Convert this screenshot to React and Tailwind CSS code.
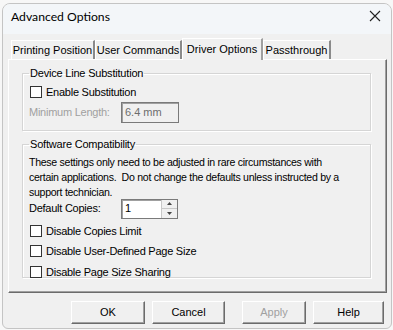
import React from "react";

const sans = { fontFamily: '"Liberation Sans", Arial, sans-serif' };

function Check({ label }) {
  return (
    <div className="flex items-center h-[20.5px]">
      <span className="ml-[1px] w-[12px] h-[12px] border border-[#333333] bg-white shrink-0" />
      <span className="ml-[4px] text-[11px] tracking-[-0.25px] text-black">{label}</span>
    </div>
  );
}

function Group({ title, className, children }) {
  return (
    <fieldset className={"border border-[#d5d5d5] shadow-[inset_1px_1px_0_#ffffff,1px_1px_0_#ffffff] px-[6px] " + className}>
      <legend className="px-[1px] text-[11px] leading-[13px] tracking-[-0.2px] text-black">{title}</legend>
      {children}
    </fieldset>
  );
}

function Tab({ label, active, w }) {
  if (active)
    return (
      <div className={"h-[22px] -mb-[1px] z-10 relative bg-[#f0f0f0] border-t border-l border-[#ffffff] border-r-2 border-r-[#a0a0a0] flex items-center justify-center text-[11px] " + w}>
        {label}
      </div>
    );
  return (
    <div className={"h-[19px] mt-[3px] border-t border-l border-[#ffffff] border-r-2 border-r-[#8a8a8a] flex items-center justify-center text-[11px] overflow-hidden whitespace-nowrap " + w}>
      {label}
    </div>
  );
}

function Btn({ label, disabled, w }) {
  return (
    <div
      className={
        "h-[23px] flex items-center justify-center text-[11px] border border-t-white border-l-white border-r-[#6b6b6b] border-b-[#6b6b6b] shadow-[inset_-1px_-1px_0_#a0a0a0] bg-[#f0f0f0] " +
        w +
        (disabled ? " text-[#a0a0a0]" : " text-black")
      }
    >
      {label}
    </div>
  );
}

export default function App() {
  return (
    <div className="w-[393px] h-[330px] bg-[#f7f7f7] pt-[3px] pl-[2px] overflow-hidden" style={sans}>
      <div className="w-[390px] h-[326px] rounded-t-[8px] rounded-b-[6px] border border-[#c4c4c4] bg-[#f0f0f0] overflow-hidden flex flex-col">
        <div className="h-[30px] bg-[#f3f6f9] flex items-start justify-between pt-[4px] pl-[8px] pr-[10px] shrink-0">
          <span className="text-[12.2px] leading-[17px] text-black" style={{ fontFamily: 'Lato, "Noto Sans", sans-serif' }}>
            Advanced Options
          </span>
          <svg width="12" height="12" viewBox="0 0 12 12" className="mt-[2px]">
            <path d="M1 1L11 11M11 1L1 11" stroke="#222" strokeWidth="1.1" />
          </svg>
        </div>
        <div className="pt-[3px] pl-[5px] pr-[4px]">
          <div className="flex h-[22px] items-end pl-[3px]">
            <Tab label="Printing Position" w="w-[84px]" />
            <Tab label="User Commands" w="w-[87px]" />
            <Tab label="Driver Options" w="w-[81px]" active />
            <Tab label="Passthrough" w="w-[68px]" />
          </div>
          <div className="h-[234px] border border-t-white border-l-white border-r-[#6b6b6b] border-b-[#6b6b6b] shadow-[inset_-1px_-1px_0_#a0a0a0] pt-[7px] px-[13px]">
            <Group title="Device Line Substitution" className="h-[64px] mr-[2px]">
              <div className="mt-[2px]">
                <Check label="Enable Substitution" />
                <div className="flex items-center -mt-[1px]">
                  <span className="text-[11px] tracking-[-0.25px] text-[#a0a0a0] w-[92px]">Minimum Length:</span>
                  <div className="w-[58px] h-[21px] border border-[#7a7a7a] shadow-[inset_1px_1px_0_#a0a0a0] bg-[#f0f0f0] text-[11px] text-[#6d6d6d] flex items-center pl-[3px]">
                    6.4 mm
                  </div>
                </div>
              </div>
            </Group>
            <Group title="Software Compatibility" className="h-[140px] mt-[7px] mr-[2px]">
              <p className="text-[10.6px] leading-[15px] tracking-[-0.3px] mt-[3.5px] whitespace-nowrap">
                These settings only need to be adjusted in rare circumstances with
                <br />
                certain applications.&nbsp; Do not change the defaults unless instructed by a
                <br />
                support technician.
              </p>
              <div className="flex items-center h-[20px] -mt-[1px]">
                <span className="text-[11px] tracking-[-0.25px] w-[92px]">Default Copies:</span>
                <div className="w-[57px] h-[20px] border border-[#7a7a7a] shadow-[inset_1px_1px_0_#a0a0a0] bg-white flex">
                  <span className="flex-1 text-[11px] pl-[3px] flex items-center">1</span>
                  <div className="w-[16px] flex flex-col border-l border-[#c8c8c8] bg-[#f0f0f0]">
                    <div className="flex-1 flex items-center justify-center border-b border-[#c8c8c8]">
                      <svg width="5" height="3" viewBox="0 0 5 3"><path d="M0 3L2.5 0L5 3Z" fill="#444" /></svg>
                    </div>
                    <div className="flex-1 flex items-center justify-center">
                      <svg width="5" height="3" viewBox="0 0 5 3"><path d="M0 0L2.5 3L5 0Z" fill="#444" /></svg>
                    </div>
                  </div>
                </div>
              </div>
              <div className="mt-[2px]">
                <Check label="Disable Copies Limit" />
                <Check label="Disable User-Defined Page Size" />
                <Check label="Disable Page Size Sharing" />
              </div>
            </Group>
          </div>
          <div className="flex mt-[8px] pl-[63px]">
            <Btn label="OK" w="w-[74px]" />
            <Btn label="Cancel" w="w-[73px] ml-[7px]" />
            <Btn label="Apply" w="w-[64px] ml-[17px]" disabled />
            <Btn label="Help" w="w-[71px] ml-[7px]" />
          </div>
        </div>
      </div>
    </div>
  );
}
